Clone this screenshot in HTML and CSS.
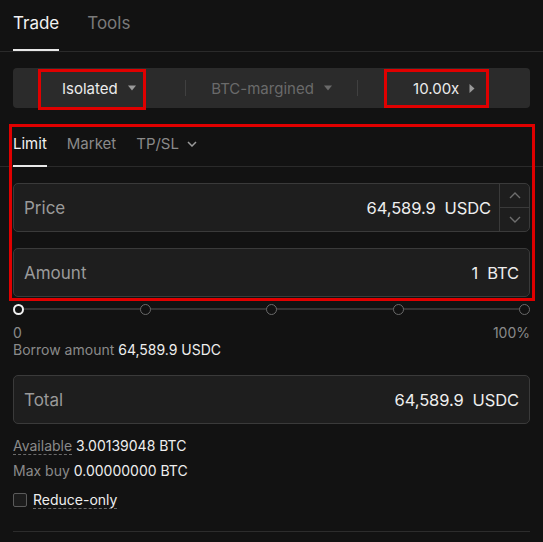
FILE: index.html
```html
<!DOCTYPE html>
<html>
<head>
<meta charset="utf-8">
<link rel="stylesheet" href="styles.css">
</head>
<body>
<div class="panel">
  <div class="tabs">
    <div class="tab active">Trade</div>
    <div class="tab">Tools</div>
  </div>
  <div class="content">
    <div class="segbar">
      <div class="seg"><span>Isolated</span><svg class="caret" width="8" height="6" viewBox="0 0 8 6"><path d="M0 0.5H8L4 5.5Z" fill="#9a9a9a"/></svg></div>
      <div class="sep"></div>
      <div class="seg muted"><span>BTC-margined</span><svg class="caret" width="8" height="6" viewBox="0 0 8 6"><path d="M0 0.5H8L4 5.5Z" fill="#6a6a6a"/></svg></div>
      <div class="sep"></div>
      <div class="seg"><span>10.00x</span><svg class="caret" width="6" height="9" viewBox="0 0 6 9"><path d="M0.5 0L5.5 4.5L0.5 9Z" fill="#9a9a9a"/></svg></div>
    </div>

    <div class="otabs">
      <div class="otab active">Limit</div>
      <div class="otab">Market</div>
      <div class="otab">TP/SL <svg width="10" height="6" viewBox="0 0 10 6"><path d="M1 1L5 5L9 1" fill="none" stroke="#9a9a9a" stroke-width="1.5"/></svg></div>
    </div>

    <div class="field price">
      <div class="label">Price</div>
      <div class="val">64,589.9<span class="unit">USDC</span></div>
      <div class="stepper">
        <div class="step"><svg width="12" height="7" viewBox="0 0 12 7"><path d="M1 6L6 1L11 6" fill="none" stroke="#6e6e6e" stroke-width="1.4"/></svg></div>
        <div class="step"><svg width="12" height="7" viewBox="0 0 12 7"><path d="M1 1L6 6L11 1" fill="none" stroke="#6e6e6e" stroke-width="1.4"/></svg></div>
      </div>
    </div>

    <div class="field amount">
      <div class="label">Amount</div>
      <div class="val">1<span class="unit">BTC</span></div>
    </div>

    <div class="slider">
      <div class="track"></div>
      <div class="knob first"></div>
      <div class="knob"></div>
      <div class="knob"></div>
      <div class="knob"></div>
      <div class="knob"></div>
    </div>
    <div class="scale"><span>0</span><span>100%</span></div>
    <div class="line borrow"><span class="muted-t">Borrow amount</span> <span class="white">64,589.9 USDC</span></div>

    <div class="field total">
      <div class="label">Total</div>
      <div class="val">64,589.9<span class="unit">USDC</span></div>
    </div>

    <div class="line avail"><span class="muted-t dashed">Available</span> <span class="white">3.00139048 BTC</span></div>
    <div class="line maxbuy"><span class="muted-t">Max buy</span> <span class="white">0.00000000 BTC</span></div>
    <div class="reduce"><span class="box"></span><span class="dashed white">Reduce-only</span></div>
    <div class="bottom"></div>
  </div>

  <div class="mark m1"></div>
  <div class="mark m2"></div>
  <div class="mark m3"></div>
</div>
</body>
</html>
```

FILE: styles.css
```css
* { box-sizing: border-box; }
html, body { margin: 0; padding: 0; background: #121212; }
body { font-family: Inter, "Noto Sans", "Liberation Sans", sans-serif; color: #e6e6e6; width: 543px; height: 542px; overflow: hidden; }
.panel { position: relative; width: 543px; height: 542px; }

.tabs { display: flex; gap: 28px; height: 52px; padding: 0 13px; border-bottom: 1px solid #2a2a2a; }
.tab { font-size: 17px; color: #7a7a7a; padding-top: 13px; height: 51px; }
.tab.active { color: #f2f2f2; border-bottom: 2px solid #e8e8e8; height: 51px; }

.content { padding: 0 13px; }

.segbar { margin-top: 16px; height: 40px; background: #2b2b2b; border-radius: 4px; display: flex; align-items: center; }
.seg { flex: 1; display: flex; align-items: center; justify-content: center; gap: 10px; font-size: 15px; color: #ececec; }
.seg.muted { color: #6a6a6a; }
.sep { width: 1px; height: 16px; background: #404040; }

.otabs { display: flex; gap: 20px; height: 59px; padding-top: 26px; border-bottom: 1px solid #2a2a2a; margin: 0 -13px; padding-left: 13px; }
.otab { font-size: 15px; color: #8a8a8a; display: flex; align-items: flex-start; gap: 8px; height: 33px; }
.otab svg { margin-top: 7px; }
.otab.active { color: #f2f2f2; border-bottom: 2px solid #e8e8e8; }

.field { position: relative; height: 49px; background: #1e1e1e; border: 1px solid #3a3a3a; border-radius: 5px; display: flex; align-items: center; padding: 0 10px; }
.field .label { font-size: 17px; color: #9a9a9a; flex: 1; }
.field .val { font-size: 16.5px; color: #eeeeee; letter-spacing: -0.1px; }
.field .unit { margin-left: 9px; }
.price { margin-top: 16px; padding-right: 0; }
.price .val { margin-right: 8px; }
.stepper { width: 30px; height: 47px; border-left: 1px solid #3a3a3a; display: flex; flex-direction: column; }
.step { flex: 1; display: flex; align-items: center; justify-content: center; }
.step + .step { border-top: 1px solid #3a3a3a; }
.amount { margin-top: 16px; }

.slider { position: relative; height: 12px; margin-top: 6px; display: flex; justify-content: space-between; align-items: center; }
.track { position: absolute; left: 5px; right: 5px; top: 5px; height: 2px; background: #333333; }
.knob { position: relative; width: 11px; height: 11px; border-radius: 50%; border: 1.5px solid #6a6a6a; background: #121212; }
.knob.first { border: 2px solid #f2f2f2; }

.scale { display: flex; justify-content: space-between; font-size: 14px; color: #8a8a8a; margin-top: 10px; line-height: 16px; }
.line { font-size: 14px; line-height: 18px; }
.muted-t { color: #8a8a8a; }
.white { color: #eeeeee; }
.borrow { margin-top: 0; }
.total { margin-top: 16px; }
.avail { margin-top: 13px; }
.maxbuy { margin-top: 7px; }
.dashed { border-bottom: 1px dashed #6a6a6a; }
.reduce { display: flex; align-items: center; gap: 6px; margin-top: 11px; font-size: 14px; }
.box { width: 14px; height: 14px; border: 1px solid #5a5a5a; border-radius: 2px; background: #1c1c1c; }
.bottom { margin-top: 22px; height: 1px; background: #2c2c2c; }

.mark { position: absolute; border: 3px solid #e00000; }
.m1 { left: 38px; top: 69px; width: 108px; height: 41px; }
.m2 { left: 384px; top: 69px; width: 105px; height: 39px; }
.m3 { left: 9px; top: 124px; width: 526px; height: 177px; border-width: 3.5px; }
```
